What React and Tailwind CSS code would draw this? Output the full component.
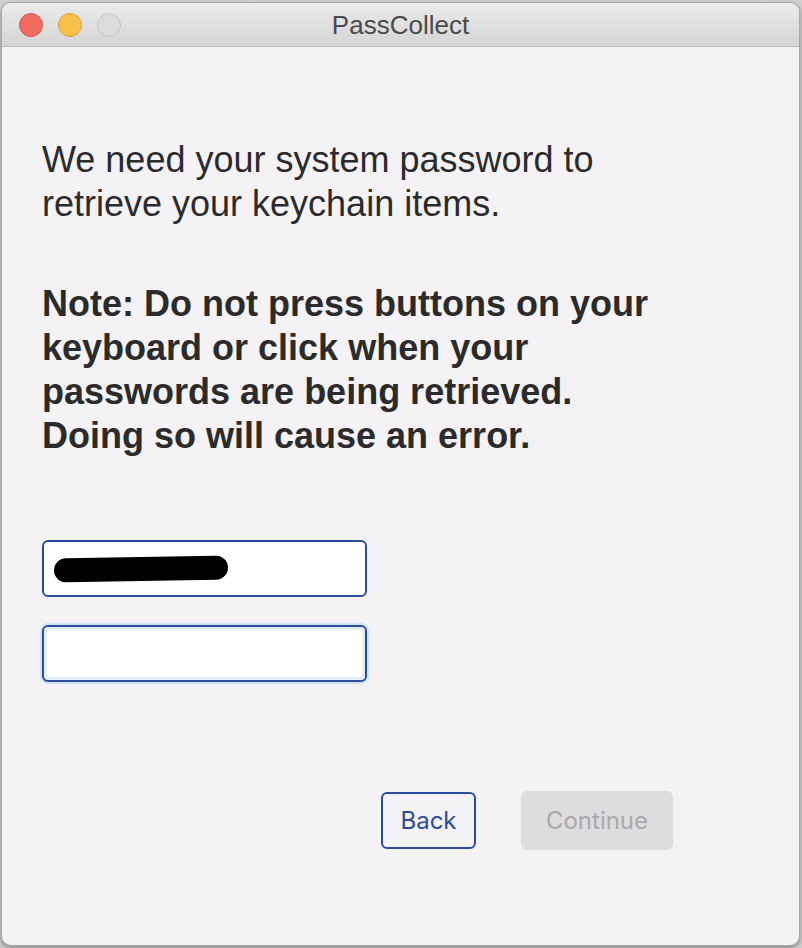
export default function App() {
  return (
    <div className="w-[802px] h-[948px] bg-[#cfcfcf] pt-[2px] pl-[1px] pr-[2px] pb-[2px]" style={{ fontFamily: "'Liberation Sans', Arial, sans-serif" }}>
      <div className="w-full h-full rounded-[10px] overflow-hidden bg-[#f4f2f5] border border-[#a8a8a8] flex flex-col shadow-[0_2px_4px_rgba(0,0,0,0.35)]">

        {/* Title bar */}
        <div className="relative h-[44px] shrink-0 bg-gradient-to-b from-[#ebebeb] to-[#d5d5d5] border-b border-[#bdbdbd] flex items-center">
          <div className="flex items-center gap-[15px] pl-[17px]">
            <div className="w-[24px] h-[24px] rounded-full bg-[#f06a5f] border border-[#d9544a]" />
            <div className="w-[24px] h-[24px] rounded-full bg-[#f8c14a] border border-[#dea33a]" />
            <div className="w-[24px] h-[24px] rounded-full bg-[#dcdcdc] border border-[#c4c4c4]" />
          </div>
          <div className="absolute inset-0 flex items-center justify-center text-[26px] text-[#4a4a4a] pt-[2px]">
            PassCollect
          </div>
        </div>

        {/* Body */}
        <div className="flex-1 pl-[40px] pt-[91px]">

          <p className="text-[36px] leading-[44px] text-[#2b2b2b] w-[700px]">
            We need your system password to
            <br />
            retrieve your keychain items.
          </p>

          <p className="mt-[56px] text-[36px] leading-[44px] font-bold text-[#2b2b2b] w-[700px]">
            Note: Do not press buttons on your
            <br />
            keyboard or click when your
            <br />
            passwords are being retrieved.
            <br />
            Doing so will cause an error.
          </p>

          <div className="mt-[82px] flex flex-col gap-[28px]">
            <div className="w-[325px] h-[57px] bg-white border-2 border-[#2b4c9b] rounded-[6px] flex items-center pl-[10px]">
              <div className="w-[174px] h-[24px] bg-black rounded-full -rotate-[1deg]" />
            </div>
            <div className="w-[325px] h-[57px] bg-white border-2 border-[#2b4c9b] rounded-[6px] shadow-[0_0_0_2px_#cfe4f5,inset_0_0_0_3px_#e2eff9]" />
          </div>

          <div className="mt-[109px] flex items-center pl-[339px] gap-[45px]" style={{ fontFamily: "Inter, 'Liberation Sans', sans-serif" }}>
            <button className="w-[95px] h-[57px] rounded-[6px] border-2 border-[#2b4c9b] text-[#2b4c9b] text-[24px] flex items-center justify-center">
              Back
            </button>
            <button className="w-[152px] h-[59px] rounded-[6px] bg-[#dedcdf] text-[#a9a9a9] text-[24px] flex items-center justify-center">
              Continue
            </button>
          </div>

        </div>
      </div>
    </div>
  );
}
